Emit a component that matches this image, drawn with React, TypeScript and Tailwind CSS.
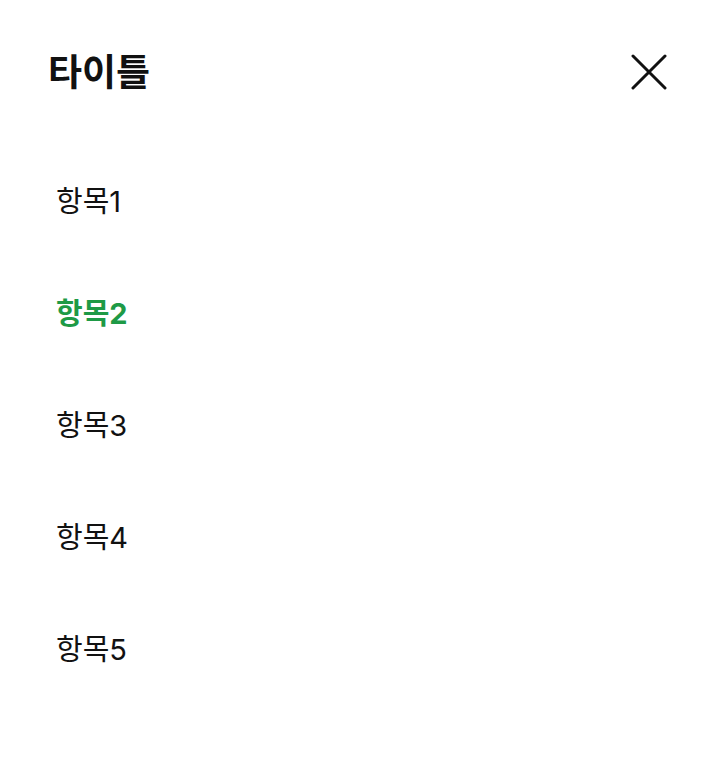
import React from 'react'

const items = ['항목1', '항목2', '항목3', '항목4', '항목5']

export default function App() {
  const active = 1
  return (
    <div className="w-[720px] h-[768px] bg-white font-['Inter','Noto_Sans_CJK_KR',sans-serif]">
      {/* Header */}
      <div className="flex items-center justify-between pl-12 pr-[53px] pt-[48px] h-[96px]">
        <h1 className="text-[37px] font-bold text-[#111] leading-none">타이틀</h1>
        <svg width="36" height="36" viewBox="0 0 36 36" className="text-[#111]">
          <path d="M2 2L34 34M34 2L2 34" stroke="currentColor" strokeWidth="3" strokeLinecap="round" />
        </svg>
      </div>

      {/* Menu */}
      <ul className="flex flex-col pt-[49px] pl-[56px]">
        {items.map((item, i) => (
          <li
            key={item}
            className={
              'h-[112px] flex items-center text-[29px] leading-none ' +
              (i === active ? 'text-[#1e9a46] font-bold' : 'text-[#111]')
            }
          >
            {item}
          </li>
        ))}
      </ul>
    </div>
  )
}
